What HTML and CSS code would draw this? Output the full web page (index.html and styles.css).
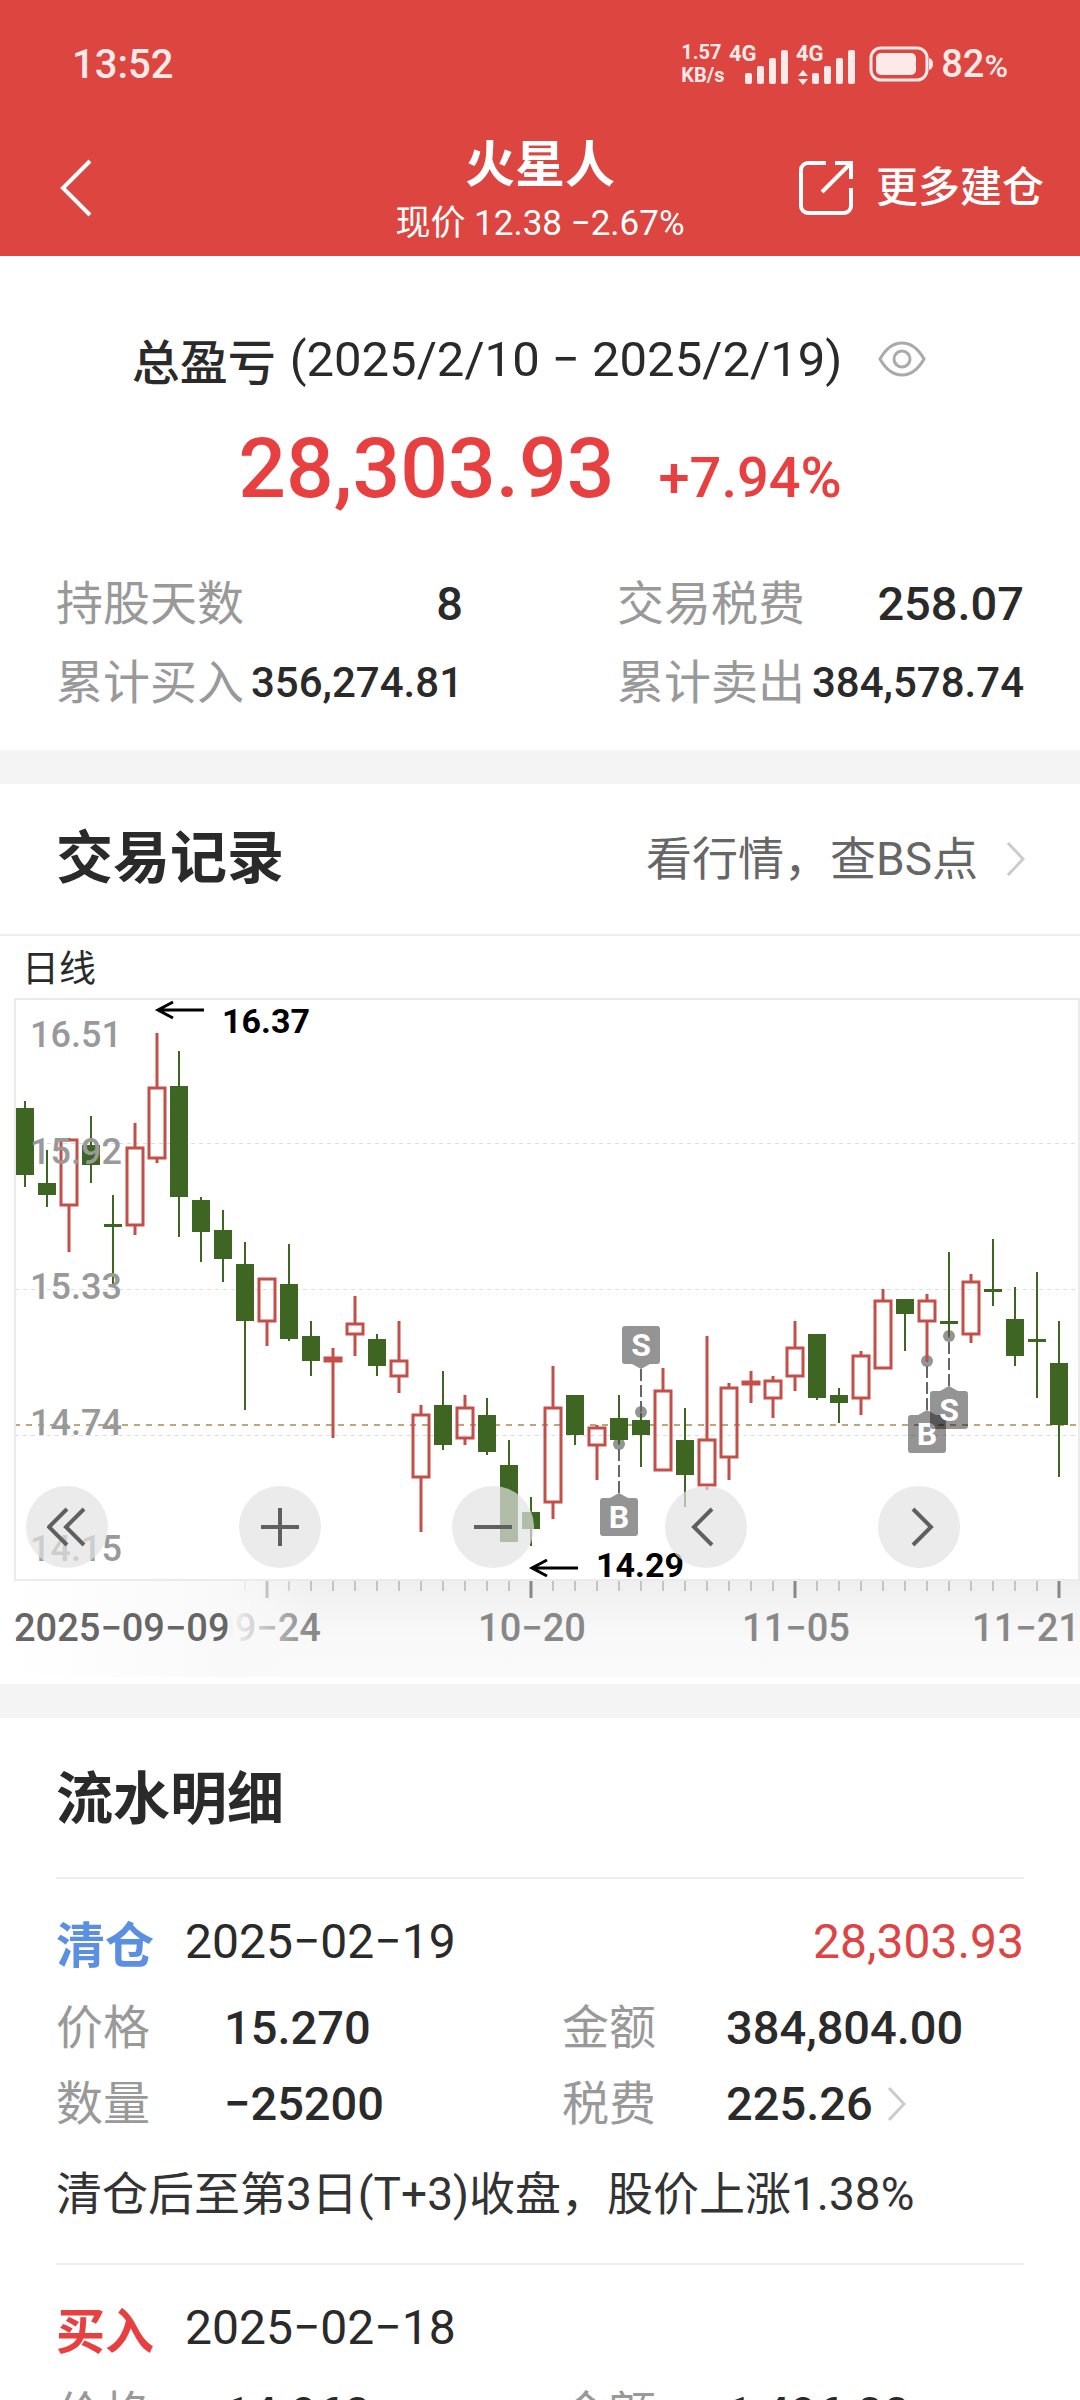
FILE: index.html
```html
<!DOCTYPE html>
<html lang="zh-CN">
<head>
    <meta charset="UTF-8">
    <meta name="viewport" content="width=device-width, initial-scale=1.0">
    <title>火星人 - 交易记录</title>
    <link rel="stylesheet" href="styles.css">
</head>
<body>
    <header class="header">
        <div class="status">
            <span class="time">13:52</span>
            <div class="status-right">
                <span class="speed">1.57<br>KB/s</span>
                <svg class="signal" viewBox="0 0 128 42" width="128" height="42">
                    <text x="0" y="18">4G</text>
                    <text x="67" y="18">4G</text>
                    <rect x="16" y="30" width="7" height="11" rx="2"/>
                    <rect x="28" y="23" width="7" height="18" rx="2"/>
                    <rect x="40" y="15" width="7" height="26" rx="2"/>
                    <rect x="52" y="7" width="7" height="34" rx="2"/>
                    <path d="M74 27l5 6h-10zM74 42l5-6h-10z"/>
                    <rect x="83" y="30" width="7" height="11" rx="2"/>
                    <rect x="95" y="23" width="7" height="18" rx="2"/>
                    <rect x="107" y="15" width="7" height="26" rx="2"/>
                    <rect x="119" y="7" width="7" height="34" rx="2"/>
                </svg>
                <svg class="battery" viewBox="0 0 64 36" width="64" height="36">
                    <rect x="2" y="2" width="56" height="32" rx="10" fill="none" stroke="#fde9e8" stroke-width="3"/>
                    <rect x="7" y="7" width="40" height="22" rx="5"/>
                    <path d="M60 12q4 1 4 6t-4 6z"/>
                </svg>
                <span class="percent">82<small>%</small></span>
            </div>
        </div>
        <div class="navbar">
            <button class="back" aria-label="返回">
                <svg viewBox="0 0 32 58" width="32" height="58"><path d="M30 2L3 29l27 27"/></svg>
            </button>
            <div class="stock">
                <h1>火星人</h1>
                <p>现价 12.38 −2.67%</p>
            </div>
            <button class="more">
                <svg viewBox="0 0 56 56" width="56" height="56">
                    <path d="M28 3H10a7 7 0 0 0-7 7v36a7 7 0 0 0 7 7h36a7 7 0 0 0 7-7V28M37 3h16v16M53 3L24 32"/>
                </svg>
                更多建仓
            </button>
        </div>
    </header>

    <section class="summary">
        <div class="period">
            <b>总盈亏</b>
            <span>(2025/2/10 − 2025/2/19)</span>
            <button class="eye" aria-label="隐藏金额">
                <svg viewBox="0 0 48 36" width="48" height="36">
                    <path d="M2 18Q11 2 24 2t22 16Q37 34 24 34T2 18z"/>
                    <circle cx="24" cy="18" r="8"/>
                </svg>
            </button>
        </div>
        <div class="profit">
            <strong>28,303.93</strong>
            <span>+7.94%</span>
        </div>
        <div class="stats">
            <div class="stat"><span>持股天数</span><b>8</b></div>
            <div class="stat"><span>交易税费</span><b>258.07</b></div>
            <div class="stat"><span>累计买入</span><b class="small">356,274.81</b></div>
            <div class="stat"><span>累计卖出</span><b class="small">384,578.74</b></div>
        </div>
    </section>

    <section class="record">
        <div class="section-head">
            <h2>交易记录</h2>
            <a href="#">看行情，查BS点
                <svg class="arrow" viewBox="0 0 20 36" width="20" height="36"><path d="M2 2l15 16L2 34"/></svg>
            </a>
        </div>
        <p class="period-name">日线</p>
        <div class="chart">
            <svg id="kline" viewBox="0 998 1080 680">
                <defs>
                    <linearGradient id="axis-bg" x1="0" y1="0" x2="0" y2="1">
                        <stop offset="0" stop-color="#efefef"/>
                        <stop offset="0.6" stop-color="#f9f9f9"/>
                        <stop offset="1" stop-color="#fafafa"/>
                    </linearGradient>
                    <linearGradient id="axis-fade">
                        <stop offset="0" stop-color="#fff"/>
                        <stop offset="0.72" stop-color="#f9f9f9"/>
                        <stop offset="1" stop-color="#f9f9f9" stop-opacity="0"/>
                    </linearGradient>
                </defs>
                <path class="grid" d="M15 1143.5H1079M15 1289.5H1079M15 1435.5H1079"/>
                <path class="cost" d="M14 1425H1079"/>
                <g id="marks"></g>
                <g id="candles"></g>
                <g class="price">
                    <text x="30" y="1047">16.51</text>
                    <text x="30" y="1164">15.92</text>
                    <text x="30" y="1299">15.33</text>
                    <text x="30" y="1435">14.74</text>
                    <text x="30" y="1561">14.15</text>
                </g>
                <g class="peak">
                    <path d="M204 1010H158M173 1002l-15 8 15 8"/>
                    <text x="222" y="1033">16.37</text>
                    <path d="M578 1568H532M547 1560l-15 8 15 8"/>
                    <text x="596" y="1577">14.29</text>
                </g>
                <rect x="14" y="1581" width="1066" height="96" fill="url(#axis-bg)"/>
                <g id="ticks"></g>
                <g class="date">
                    <text x="267" y="1641">09−24</text>
                    <text x="532" y="1641">10−20</text>
                    <text x="796" y="1641">11−05</text>
                    <text x="1026" y="1641">11−21</text>
                </g>
                <rect x="14" y="1581" width="296" height="96" fill="url(#axis-fade)"/>
                <text class="date-start" x="14" y="1641">2025−09−09</text>
                <rect class="frame" x="15" y="999" width="1064" height="581"/>
            </svg>
            <div class="tools">
                <button aria-label="最早"><svg viewBox="0 0 40 40"><path d="M20 2L2 20l18 18M37 2L19 20l18 18"/></svg></button>
                <button aria-label="放大"><svg viewBox="0 0 40 40"><path d="M20 1v38M1 20h38"/></svg></button>
                <button aria-label="缩小"><svg viewBox="0 0 40 40"><path d="M1 20h38"/></svg></button>
                <button aria-label="左移"><svg viewBox="0 0 40 40"><path d="M26 2L8 20l18 18"/></svg></button>
                <button aria-label="右移"><svg viewBox="0 0 40 40"><path d="M14 2l18 18-18 18"/></svg></button>
            </div>
        </div>
    </section>

    <section class="details">
        <h2>流水明细</h2>
        <div class="item">
            <div class="item-head">
                <b class="clear">清仓</b>
                <span>2025−02−19</span>
                <em>28,303.93</em>
            </div>
            <dl>
                <dt>价格</dt><dd>15.270</dd>
                <dt>金额</dt><dd>384,804.00</dd>
                <dt>数量</dt><dd>−25200</dd>
                <dt>税费</dt>
                <dd>225.26<svg class="arrow" viewBox="0 0 20 36" width="20" height="36"><path d="M2 2l15 16L2 34"/></svg></dd>
            </dl>
            <p class="note">清仓后至第3日(T+3)收盘，股价上涨1.38%</p>
        </div>
        <div class="item">
            <div class="item-head">
                <b class="buy">买入</b>
                <span>2025−02−18</span>
            </div>
            <dl>
                <dt>价格</dt><dd>14.960</dd>
                <dt>金额</dt><dd>1,496.00</dd>
            </dl>
        </div>
    </section>

    <script src="kline.js"></script>
</body>
</html>
```
FILE: styles.css
```css
* {
    box-sizing: border-box;
    margin: 0;
    padding: 0;
}

body {
    height: 100vh;
    overflow: hidden;
    background-color: #fff;
    color: #2a2a2a;
    font-family: Roboto, "Noto Sans CJK SC", sans-serif;
}

button {
    border: none;
    background: none;
    color: inherit;
    font-family: inherit;
    cursor: pointer;
}

a {
    color: inherit;
    text-decoration: none;
}

svg {
    display: block;
    flex-shrink: 0;
}

/* 顶部 */
.header {
    height: 256px;
    background-color: #dd4540;
    color: #fff;
}

.status {
    display: flex;
    justify-content: space-between;
    align-items: center;
    height: 128px;
    padding: 0 72px;
    color: #fde9e8;
    fill: #fde9e8;
    font-weight: 500;
}

.time {
    font-size: 40px;
}

.status-right {
    display: flex;
    align-items: center;
}

.speed {
    width: 48px;
    font-size: 20px;
    line-height: 23px;
    font-weight: 700;
}

.signal {
    overflow: visible;
    font-size: 22px;
    font-weight: 700;
}

.battery {
    margin: 0 8px 0 12px;
}

.percent {
    font-size: 38px;
}

.percent small {
    font-size: 32px;
}

.navbar {
    display: grid;
    grid-template-columns: 1fr auto 1fr;
    height: 128px;
    padding: 0 36px;
}

.back,
.more {
    height: 120px;
    fill: none;
    stroke: #fff;
    stroke-width: 4;
}

.back {
    justify-self: start;
    padding-left: 24px;
}

.stock {
    padding-top: 2px;
    text-align: center;
}

.stock h1 {
    font-size: 50px;
    line-height: 70px;
}

.stock p {
    font-size: 35px;
    line-height: 48px;
}

.more {
    display: flex;
    justify-self: end;
    align-items: center;
    gap: 22px;
    font-size: 42px;
    line-height: 56px;
    font-weight: 500;
}

/* 盈亏 */
.summary {
    padding: 68px 56px 28px;
    border-bottom: 34px solid #f4f4f4;
}

.period {
    display: flex;
    justify-content: center;
    align-items: center;
    height: 70px;
    padding-right: 22px;
    font-size: 48px;
}

.period b {
    margin-right: 14px;
    font-weight: 500;
}

.period span {
    font-size: 49px;
}

.eye {
    margin-left: 36px;
    fill: none;
    stroke: #aaa;
    stroke-width: 3;
}

.profit {
    display: flex;
    justify-content: center;
    align-items: baseline;
    gap: 44px;
    height: 170px;
    color: #e84040;
    font-size: 56px;
    line-height: 150px;
    font-weight: 500;
}

.profit strong {
    font-size: 84px;
    font-weight: 500;
}

.stats {
    display: grid;
    grid-template-columns: 1fr 1fr;
    column-gap: 154px;
}

.stat {
    display: flex;
    justify-content: space-between;
    height: 79px;
    color: #999;
    font-size: 47px;
    line-height: 79px;
    white-space: nowrap;
}

.stat b {
    color: #2a2a2a;
    font-weight: 500;
}

.stat .small {
    font-size: 42px;
}

/* K线图 */
.record {
    border-bottom: 34px solid #f4f4f4;
}

h2 {
    font-size: 57px;
    line-height: 80px;
}

.section-head {
    display: flex;
    justify-content: space-between;
    align-items: center;
    height: 152px;
    padding: 0 54px 0 56px;
    border-bottom: 2px solid #eee;
}

.section-head a {
    display: flex;
    align-items: center;
    gap: 28px;
    color: #666;
    font-size: 46px;
    line-height: 64px;
}

.arrow {
    fill: none;
    stroke: #ccc;
    stroke-width: 3;
}

.period-name {
    height: 62px;
    padding-left: 22px;
    font-size: 37px;
    line-height: 68px;
}

.chart {
    position: relative;
    padding-bottom: 6px;
}

#kline {
    width: 100%;
}

.grid {
    stroke: #ddd;
    stroke-dasharray: 4 4;
}

.cost {
    stroke: #bda67a;
    stroke-width: 2;
    stroke-dasharray: 6 6;
}

.frame {
    fill: none;
    stroke: #ebebeb;
    stroke-width: 2;
}

.up {
    fill: none;
    stroke: #c44f48;
    stroke-width: 3;
}

.down {
    fill: #3f6522;
    stroke: #3f6522;
    stroke-width: 2;
}

.price {
    fill: #999;
    font-size: 36px;
    font-weight: 500;
}

.peak {
    font-size: 34px;
    font-weight: 700;
}

.peak path {
    fill: none;
    stroke: #000;
    stroke-width: 3;
}

.mark {
    fill: rgba(0, 0, 0, 0.42);
}

.mark-line {
    stroke: #666;
    stroke-width: 2;
    stroke-dasharray: 12 4;
}

.mark-text {
    fill: #fff;
    font-size: 32px;
    font-weight: 700;
    text-anchor: middle;
}

.tick {
    stroke: #999;
}

.tick-major {
    stroke: #888;
    stroke-width: 3;
}

.date {
    fill: #888;
    font-size: 38px;
    font-weight: 500;
    text-anchor: middle;
}

.date-start {
    fill: #666;
    font-size: 38px;
    font-weight: 500;
}

.tools {
    position: absolute;
    left: 26px;
    right: 120px;
    bottom: 116px;
    display: flex;
    justify-content: space-between;
}

.tools button {
    display: flex;
    justify-content: center;
    align-items: center;
    width: 82px;
    height: 82px;
    border-radius: 50%;
    background-color: rgba(227, 227, 227, 0.7);
}

.tools svg {
    width: 40px;
    height: 40px;
    fill: none;
    stroke: #606060;
    stroke-width: 4;
}

/* 流水 */
.details {
    padding: 42px 56px 0;
}

.details h2 {
    padding-bottom: 37px;
}

.item {
    min-height: 386px;
    padding-top: 26px;
    border-top: 2px solid #eee;
}

.item-head {
    display: flex;
    align-items: center;
    height: 72px;
    font-size: 48px;
}

.item-head b {
    width: 129px;
    font-size: 49px;
}

.clear {
    color: #5a8fe2;
}

.buy {
    color: #e84040;
}

.item-head em {
    margin-left: auto;
    color: #dd4545;
    font-style: normal;
}

dl {
    display: grid;
    grid-template-columns: 168px 338px 164px 1fr;
    padding-top: 13px;
    font-size: 47px;
    line-height: 76px;
}

dt {
    color: #999;
}

dd {
    display: flex;
    align-items: center;
    gap: 14px;
    font-weight: 500;
}

.note {
    padding-top: 16px;
    color: #333;
    font-size: 46px;
    line-height: 72px;
    white-space: nowrap;
}
```
FILE: kline.js
```js
// 方向, 最高, 实体上沿, 实体下沿, 最低
const candles = [
    ["d", 1101, 1108, 1175, 1187], ["d", 1150, 1183, 1195, 1207],
    ["u", 1138, 1139, 1206, 1252], ["d", 1116, 1145, 1165, 1183],
    ["d", 1195, 1224, 1226, 1284], ["u", 1123, 1147, 1226, 1235],
    ["u", 1033, 1087, 1159, 1163], ["d", 1051, 1086, 1197, 1237],
    ["d", 1197, 1200, 1232, 1262], ["d", 1210, 1230, 1259, 1282],
    ["d", 1242, 1264, 1321, 1410], ["u", 1278, 1278, 1322, 1346],
    ["d", 1244, 1284, 1339, 1341], ["d", 1321, 1336, 1361, 1376],
    ["u", 1348, 1357, 1362, 1438], ["u", 1296, 1323, 1335, 1356],
    ["d", 1334, 1339, 1366, 1376], ["u", 1321, 1360, 1377, 1393],
    ["u", 1405, 1414, 1478, 1532], ["d", 1371, 1405, 1445, 1450],
    ["u", 1395, 1407, 1439, 1445], ["d", 1398, 1415, 1452, 1455],
    ["d", 1440, 1465, 1542, 1542], ["d", 1497, 1512, 1529, 1546],
    ["u", 1366, 1407, 1503, 1519], ["d", 1395, 1395, 1435, 1445],
    ["u", 1425, 1427, 1446, 1480], ["d", 1395, 1418, 1440, 1444],
    ["d", 1413, 1420, 1435, 1467], ["u", 1368, 1390, 1471, 1471],
    ["d", 1408, 1440, 1475, 1507], ["u", 1336, 1439, 1486, 1490],
    ["u", 1383, 1387, 1458, 1480], ["u", 1371, 1381, 1385, 1403],
    ["u", 1376, 1380, 1399, 1418], ["u", 1321, 1347, 1377, 1391],
    ["d", 1334, 1334, 1398, 1400], ["d", 1388, 1395, 1403, 1423],
    ["u", 1351, 1355, 1399, 1415], ["u", 1289, 1300, 1369, 1369],
    ["d", 1299, 1299, 1314, 1351], ["u", 1294, 1300, 1322, 1361],
    ["d", 1252, 1321, 1323, 1336], ["u", 1274, 1281, 1335, 1343],
    ["d", 1239, 1289, 1291, 1306], ["d", 1287, 1319, 1356, 1366],
    ["d", 1272, 1339, 1341, 1398], ["d", 1321, 1363, 1425, 1477]
];

// 买卖点: 文字, x, 圆点y, 标签上沿y
const marks = [
    ["S", 641, 1412, 1326],
    ["B", 619, 1444, 1498],
    ["B", 927, 1361, 1415],
    ["S", 949, 1336, 1391]
];

let html = "";
candles.forEach(function(c, i) {
    const x = 25 + i * 22;
    if (c[0] == "u") {
        html += `<path class="up" d="M${x} ${c[1]}V${c[2]}M${x} ${c[3]}V${c[4]}"/>`;
        html += `<rect class="up" x="${x - 8}" y="${c[2] + 1}" width="16" height="${c[3] - c[2] - 2}"/>`;
    } else {
        html += `<path class="down" d="M${x} ${c[1]}V${c[4]}"/>`;
        html += `<rect class="down" x="${x - 8}" y="${c[2] + 1}" width="16" height="${Math.max(c[3] - c[2] - 2, 1)}"/>`;
    }
});
document.getElementById("candles").innerHTML = html;

html = "";
marks.forEach(function(m) {
    const [name, x, dot, top] = m;
    const below = top > dot;
    const edge = below ? top : top + 38;
    const tip = below ? top - 5 : top + 43;
    html += `<circle class="mark" cx="${x}" cy="${dot}" r="6"/>`;
    html += `<path class="mark-line" d="M${x} ${tip}V${dot}"/>`;
    html += `<path class="mark" d="M${x - 9} ${edge}L${x} ${tip}L${x + 9} ${edge}z"/>`;
    html += `<rect class="mark" x="${x - 19}" y="${top}" width="38" height="38" rx="3"/>`;
    html += `<text class="mark-text" x="${x}" y="${top + 30}">${name}</text>`;
});
document.getElementById("marks").innerHTML = html;

html = "";
for (let i = 10; i < candles.length; i++) {
    const x = 25 + i * 22;
    if (i % 12 == 11) {
        html += `<path class="tick-major" d="M${x} 1581v17"/>`;
    } else {
        html += `<path class="tick" d="M${x} 1581v10"/>`;
    }
}
document.getElementById("ticks").innerHTML = html;
```
